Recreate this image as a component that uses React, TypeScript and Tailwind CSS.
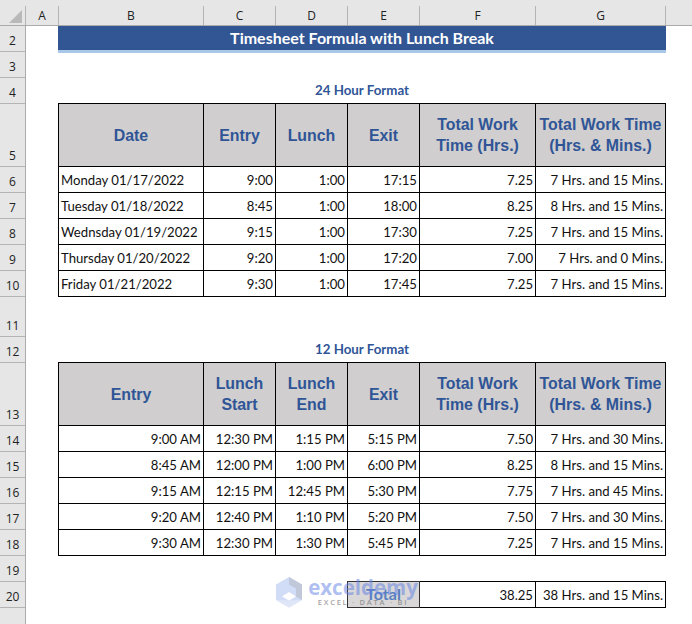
const cols = [
  { label: 'A', w: 'w-[33px]' },
  { label: 'B', w: 'w-[145px]' },
  { label: 'C', w: 'w-[72px]' },
  { label: 'D', w: 'w-[72px]' },
  { label: 'E', w: 'w-[72px]' },
  { label: 'F', w: 'w-[116px]' },
  { label: 'G', w: 'w-[130px]' },
];

const rowHeaders = [
  { n: 2, h: 'h-[26px]' },
  { n: 3, h: 'h-[26px]' },
  { n: 4, h: 'h-[26px]' },
  { n: 5, h: 'h-[63px]' },
  { n: 6, h: 'h-[26px]' },
  { n: 7, h: 'h-[26px]' },
  { n: 8, h: 'h-[26px]' },
  { n: 9, h: 'h-[26px]' },
  { n: 10, h: 'h-[26px]' },
  { n: 11, h: 'h-[40px]' },
  { n: 12, h: 'h-[26px]' },
  { n: 13, h: 'h-[63px]' },
  { n: 14, h: 'h-[26px]' },
  { n: 15, h: 'h-[26px]' },
  { n: 16, h: 'h-[26px]' },
  { n: 17, h: 'h-[26px]' },
  { n: 18, h: 'h-[26px]' },
  { n: 19, h: 'h-[26px]' },
  { n: 20, h: 'h-[26px]' },
];

const table24 = [
  ['Monday 01/17/2022', '9:00', '1:00', '17:15', '7.25', '7 Hrs. and 15 Mins.'],
  ['Tuesday 01/18/2022', '8:45', '1:00', '18:00', '8.25', '8 Hrs. and 15 Mins.'],
  ['Wednsday 01/19/2022', '9:15', '1:00', '17:30', '7.25', '7 Hrs. and 15 Mins.'],
  ['Thursday 01/20/2022', '9:20', '1:00', '17:20', '7.00', '7 Hrs. and 0 Mins.'],
  ['Friday 01/21/2022', '9:30', '1:00', '17:45', '7.25', '7 Hrs. and 15 Mins.'],
];

const table12 = [
  ['9:00 AM', '12:30 PM', '1:15 PM', '5:15 PM', '7.50', '7 Hrs. and 30 Mins.'],
  ['8:45 AM', '12:00 PM', '1:00 PM', '6:00 PM', '8.25', '8 Hrs. and 15 Mins.'],
  ['9:15 AM', '12:15 PM', '12:45 PM', '5:30 PM', '7.75', '7 Hrs. and 45 Mins.'],
  ['9:20 AM', '12:40 PM', '1:10 PM', '5:20 PM', '7.50', '7 Hrs. and 30 Mins.'],
  ['9:30 AM', '12:30 PM', '1:30 PM', '5:45 PM', '7.25', '7 Hrs. and 15 Mins.'],
];

const bodyFont = "font-['Lato','Liberation_Sans',sans-serif] text-[13.15px] text-[#111]";

function Sheet({ heads, rows }: { heads: string[][]; rows: string[][] }) {
  return (
    <div className="grid grid-cols-[145px_72px_72px_72px_116px_130px] w-[608px] border-t border-l border-black">
      {heads.map((lines, i) => (
        <div
          key={i}
          className="h-[63px] bg-[#d0cece] border-r border-b border-black flex flex-col items-center justify-center font-['Liberation_Sans',sans-serif] font-bold text-[15.9px] leading-[21px] text-[#2f5597]"
        >
          {lines.map(l => (
            <span key={l} className="whitespace-nowrap">{l}</span>
          ))}
        </div>
      ))}
      {rows.map((row, r) =>
        row.map((val, c) => (
          <div
            key={`${r}-${c}`}
            className={`h-[26px] border-r border-b border-black flex items-center px-[2px] pt-[3px] whitespace-nowrap ${bodyFont} ${
              c === 0 && rows === table24 ? 'justify-start' : 'justify-end'
            }`}
          >
            {val}
          </div>
        ))
      )}
    </div>
  );
}

function Caption({ children }: { children: string }) {
  return (
    <div className="h-[25px] pt-[1px] flex items-center justify-center font-['Lato','Liberation_Sans',sans-serif] font-bold text-[13.3px] text-[#2f5597]">
      {children}
    </div>
  );
}

function Watermark() {
  return (
    <div className="absolute left-[275px] top-[577px] w-[145px] h-[31px] flex bg-white/20 pointer-events-none">
      <svg width="28" height="31" viewBox="0 0 28 31" className="shrink-0">
        <polygon points="14,0 27,7.5 27,23 14,30.5 1,23 1,7.5" fill="#c9d6f5" opacity="0.85" />
        <polygon points="14,0 27,7.5 27,23 21,19.5 21,11.5 14,7.5" fill="#bcc3d2" opacity="0.8" />
        <polygon points="14,15 21,19.5 14,23.5 7,19.5" fill="#ffffff" />
        <polygon points="1,23 14,30.5 27,23 14,23.5" fill="#dfe6f7" />
      </svg>
      <div className="ml-[5px] w-[110px] flex flex-col items-center">
        <span className="font-['Open_Sans',sans-serif] font-bold text-[20.5px] leading-[21px] text-[#5f80e6]/50">
          exceldemy
        </span>
        <span className="font-['Open_Sans',sans-serif] font-semibold text-[7.5px] leading-[8px] tracking-[1.75px] text-[#777]/70 whitespace-nowrap">
          EXCEL · DATA · BI
        </span>
      </div>
    </div>
  );
}

export default function App() {
  return (
    <div className="relative w-[692px] h-[624px] overflow-hidden bg-white">
      {/* Column headers */}
      <div className="flex h-[26px] bg-[#e6e6e6] pt-[6px] border-b border-[#ababab]">
        <div className="w-[26px] border-r border-[#b4b4b4] flex items-start justify-end pt-[4px] pr-[3px]">
          <svg width="13" height="13" viewBox="0 0 13 13">
            <polygon points="0,13 13,13 13,0" fill="#b9b9b9" />
          </svg>
        </div>
        {cols.map(c => (
          <div
            key={c.label}
            className={`${c.w} border-r border-[#b4b4b4] flex items-center justify-center font-['Open_Sans',sans-serif] text-[12px] text-[#222]`}
          >
            {c.label}
          </div>
        ))}
      </div>

      <div className="flex">
        {/* Row headers */}
        <div className="w-[26px] h-[598px] shrink-0 flex flex-col bg-[#e6e6e6] border-r border-[#ababab]">
          {rowHeaders.map(r => (
            <div
              key={r.n}
              className={`${r.h} shrink-0 border-b border-[#b4b4b4] flex items-end justify-center font-['Open_Sans',sans-serif] text-[12px] leading-[20px] text-[#222]`}
            >
              {r.n}
            </div>
          ))}
        </div>

        {/* Sheet body */}
        <div className="ml-[32px] flex flex-col">
          <div className="h-[27px] w-[608px] bg-[#325594] border-b-[3px] border-[#a9c7e6] flex items-center justify-center font-['Lato','Liberation_Sans',sans-serif] font-bold text-[16px] text-white">
            Timesheet Formula with Lunch Break
          </div>
          <div className="h-[25px]" />
          <Caption>24 Hour Format</Caption>
          <Sheet
            heads={[['Date'], ['Entry'], ['Lunch'], ['Exit'], ['Total Work', 'Time (Hrs.)'], ['Total Work Time', '(Hrs. & Mins.)']]}
            rows={table24}
          />
          <div className="h-[40px]" />
          <Caption>12 Hour Format</Caption>
          <Sheet
            heads={[['Entry'], ['Lunch', 'Start'], ['Lunch', 'End'], ['Exit'], ['Total Work', 'Time (Hrs.)'], ['Total Work Time', '(Hrs. & Mins.)']]}
            rows={table12}
          />
          <div className="h-[25px]" />
          <div className="ml-[289px] grid grid-cols-[72px_116px_130px] w-[319px] border-t border-l border-black">
            <div className="h-[26px] bg-[#d0cece] border-r border-b border-black flex items-center justify-center pb-[1px] font-['Lato','Liberation_Sans',sans-serif] font-bold text-[16px] text-[#2f5fb0]">
              Total
            </div>
            <div className={`h-[26px] border-r border-b border-black flex items-center justify-end px-[2px] pt-[3px] ${bodyFont}`}>38.25</div>
            <div className={`h-[26px] border-r border-b border-black flex items-center justify-end px-[2px] pt-[3px] whitespace-nowrap ${bodyFont}`}>
              38 Hrs. and 15 Mins.
            </div>
          </div>
        </div>
      </div>

      <Watermark />
    </div>
  );
}
